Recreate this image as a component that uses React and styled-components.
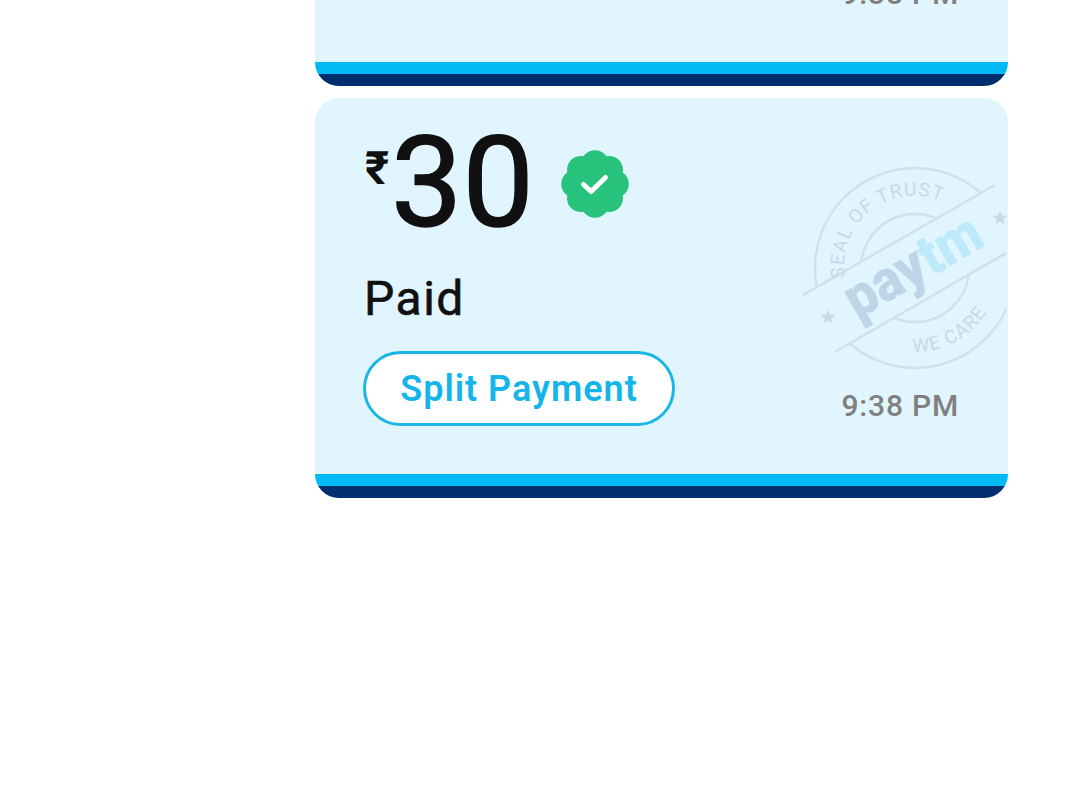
import styled, { createGlobalStyle } from 'styled-components'

const GlobalStyle = createGlobalStyle`
    html, body {
        margin: 0;
        background: #fff;
        height: 810px;
        overflow: hidden;
        font-family: Roboto, "Noto Sans", sans-serif;
    }
`

const payments = [
    { id: 1, amount: 30, status: 'Paid', time: '9:38 PM', canSplit: false },
    { id: 2, amount: 30, status: 'Paid', time: '9:38 PM', canSplit: true },
]

function VerifiedBadge() {
    const lobes = [0, 45, 90, 135, 180, 225, 270, 315]
    return (
        <BadgeIcon viewBox="0 0 68 68">
            <circle cx="34" cy="34" r="25" fill="#27c27c" />
            {lobes.map((deg) => (
                <circle
                    key={deg}
                    cx={34 + 20 * Math.cos((deg * Math.PI) / 180)}
                    cy={34 + 20 * Math.sin((deg * Math.PI) / 180)}
                    r="13.8"
                    fill="#27c27c"
                />
            ))}
            <path d="M22.500 34.500l7.600 7L44.500 27.500" fill="none" stroke="#fff" strokeWidth="5" strokeLinecap="round" strokeLinejoin="round" />
        </BadgeIcon>
    )
}

function SealWatermark({ id }) {
    return (
        <Seal viewBox="0 0 206 215">
            <defs>
                <path id={`seal-top-${id}`} d="M45 118A70 70 0 0 1 152 47" />
                <path id={`seal-bottom-${id}`} d="M113 192A84 84 0 0 0 192 142" />
            </defs>
            <g fill="none" stroke="#cde2ec" strokeWidth="2.4">
                <circle cx="115" cy="108" r="100" />
                <circle cx="115" cy="108" r="54" />
            </g>
            <polygon points="3,135 193,25 225,82 35,192" fill="#e0f5fe" />
            <g stroke="#cde2ec" strokeWidth="2.4">
                <line x1="3" y1="135" x2="195" y2="25" />
                <line x1="35" y1="192" x2="206" y2="93" />
            </g>
            <SealCaption>
                <textPath href={`#seal-top-${id}`}>SEAL OF TRUST</textPath>
            </SealCaption>
            <SealCaption>
                <textPath href={`#seal-bottom-${id}`}>WE CARE</textPath>
            </SealCaption>
            <g fill="#c4dae5">
                <path d="M28 150l2 4.600 5 .4-3.800 3.200 1.200 4.900-4.400-2.600-4.400 2.600 1.200-4.900-3.800-3.200 5-.4z" />
                <path d="M200 51l2 4.600 5 .4-3.800 3.200 1.200 4.900-4.400-2.600-4.400 2.600 1.200-4.900-3.800-3.200 5-.4z" />
            </g>
            <g transform="rotate(-30 116 111)">
                <SealLogo x="116" y="124" textAnchor="middle" textLength="150" lengthAdjust="spacingAndGlyphs">
                    <tspan fill="#bcd6e8">pay</tspan>
                    <tspan fill="#bde9fa">tm</tspan>
                </SealLogo>
            </g>
        </Seal>
    )
}

export default function App() {
    return (
        <>
            <GlobalStyle />
            <Page>
                <CardList>
                    {payments.map((item) => (
                        <Card key={item.id}>
                            <SealWatermark id={item.id} />
                            <Body>
                                <AmountRow>
                                    <Rupee>₹</Rupee>
                                    <Amount>{item.amount}</Amount>
                                    <VerifiedBadge />
                                </AmountRow>
                                <Status>{item.status}</Status>
                                <Footer>
                                    {item.canSplit && <SplitButton>Split Payment</SplitButton>}
                                    <Time>{item.time}</Time>
                                </Footer>
                            </Body>
                            <CyanBar />
                            <NavyBar />
                        </Card>
                    ))}
                </CardList>
            </Page>
        </>
    )
}

const Page = styled.div`
    width: 1080px;
    height: 810px;
    overflow: hidden;
    display: flex;
    justify-content: flex-start;
    padding-left: 315px;
    box-sizing: border-box;
`
const CardList = styled.div`
    width: 693px;
    margin-top: -314px;
    display: flex;
    flex-direction: column;
    gap: 12px;
`
const Card = styled.div`
    position: relative;
    height: 400px;
    flex: none;
    display: flex;
    flex-direction: column;
    background: #e0f5fe;
    border-radius: 24px;
    overflow: hidden;
`
const Seal = styled.svg`
    position: absolute;
    top: 62px;
    left: 485px;
    width: 206px;
    height: 215px;
`
const SealCaption = styled.text`
    font-family: Roboto, sans-serif;
    font-size: 19px;
    letter-spacing: 1.2px;
    fill: #c4dbe6;
`
const SealLogo = styled.text`
    font-family: Roboto, sans-serif;
    font-size: 58px;
    font-weight: 900;
`
const Body = styled.div`
    position: relative;
    flex: 1;
    display: flex;
    flex-direction: column;
    padding: 17px 49px 48px 48px;
`
const AmountRow = styled.div`
    display: flex;
    align-items: flex-start;
    height: 136px;
`
const Rupee = styled.span`
    font-size: 46px;
    font-weight: 700;
    line-height: 52px;
    margin-top: 27px;
    margin-left: 2px;
    width: 26px;
    color: #101010;
`
const Amount = styled.span`
    font-size: 127px;
    font-weight: 400;
    -webkit-text-stroke: 1.5px #101010;
    line-height: 136px;
    color: #101010;
`
const BadgeIcon = styled.svg`
    width: 68px;
    height: 68px;
    margin: 35px 0 0 27px;
`
const Status = styled.div`
    margin-top: 20px;
    margin-left: 1px;
    font-size: 48px;
    font-weight: 400;
    -webkit-text-stroke: 0.6px #101010;
    line-height: 56px;
    letter-spacing: 1.5px;
    color: #101010;
`
const Footer = styled.div`
    margin-top: auto;
    display: flex;
    align-items: flex-end;
    justify-content: space-between;
    min-height: 75px;
`
const SplitButton = styled.button`
    box-sizing: border-box;
    width: 312px;
    height: 75px;
    padding: 0;
    background: #fff;
    border: 3px solid #1bb5e6;
    border-radius: 38px;
    font-family: Roboto, sans-serif;
    font-size: 36px;
    font-weight: 600;
    letter-spacing: 1px;
    color: #15b5ec;
`
const Time = styled.span`
    margin-left: auto;
    font-size: 30px;
    font-weight: 500;
    line-height: 38px;
    letter-spacing: 0.8px;
    margin-bottom: 1px;
    color: #808080;
`
const CyanBar = styled.div`
    height: 12px;
    background: #00b9f5;
`
const NavyBar = styled.div`
    height: 12px;
    background: #002e6e;
`
